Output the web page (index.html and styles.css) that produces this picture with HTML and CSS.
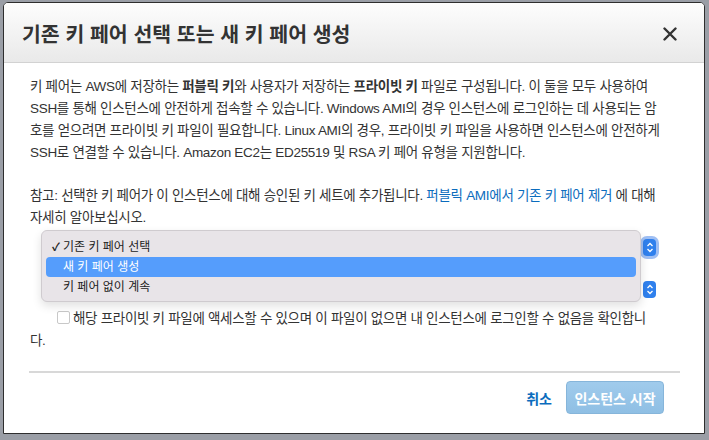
FILE: index.html
```html
<!DOCTYPE html>
<html lang="ko">
<head>
<meta charset="utf-8">
<link rel="stylesheet" href="styles.css">
</head>
<body>
<div class="modal">
  <div class="header">
    <h1 class="title">기존 키 페어 선택 또는 새 키 페어 생성</h1>
    <span class="close">
      <svg width="14" height="14" viewBox="0 0 14 14"><path d="M1.5 1.5 L12.5 12.5 M12.5 1.5 L1.5 12.5" stroke="#333" stroke-width="2.4" stroke-linecap="round"/></svg>
    </span>
  </div>
  <div class="body">
    <p class="para">키 페어는 AWS에 저장하는 <b>퍼블릭 키</b>와 사용자가 저장하는 <b>프라이빗 키</b> 파일로 구성됩니다. 이 둘을 모두 사용하여<br>SSH를 통해 인스턴스에 안전하게 접속할 수 있습니다. Windows AMI의 경우 인스턴스에 로그인하는 데 사용되는 암<br>호를 얻으려면 프라이빗 키 파일이 필요합니다. Linux AMI의 경우, 프라이빗 키 파일을 사용하면 인스턴스에 안전하게<br>SSH로 연결할 수 있습니다. Amazon EC2는 ED25519 및 RSA 키 페어 유형을 지원합니다.</p>
    <p class="para note">참고: 선택한 키 페어가 이 인스턴스에 대해 승인된 키 세트에 추가됩니다. <a class="link">퍼블릭 AMI에서 기존 키 페어 제거</a> 에 대해<br>자세히 알아보십시오.</p>
    <div class="form">
      <div class="select focused"><span class="arrows"><svg width="8" height="11" viewBox="0 0 8 11"><path d="M1.5 4 L4 1.5 L6.5 4 M1.5 7 L4 9.5 L6.5 7" fill="none" stroke="#fff" stroke-width="1.3"/></svg></span></div>
      <div class="select"><span class="arrows"><svg width="8" height="11" viewBox="0 0 8 11"><path d="M1.5 4 L4 1.5 L6.5 4 M1.5 7 L4 9.5 L6.5 7" fill="none" stroke="#fff" stroke-width="1.3"/></svg></span></div>
      <ul class="menu">
        <li class="item"><span class="check">✓</span>기존 키 페어 선택</li>
        <li class="item active"><span class="check"></span>새 키 페어 생성</li>
        <li class="item"><span class="check"></span>키 페어 없이 계속</li>
      </ul>
    </div>
    <label class="ack"><span class="box"></span>해당 프라이빗 키 파일에 액세스할 수 있으며 이 파일이 없으면 내 인스턴스에 로그인할 수 없음을 확인합니<br>다.</label>
  </div>
  <div class="footer">
    <a class="cancel">취소</a>
    <button class="primary">인스턴스 시작</button>
  </div>
</div>
</body>
</html>
```
FILE: styles.css
```css
html, body {
  margin: 0;
  padding: 0;
}
body {
  width: 709px;
  height: 440px;
  background: #9a9ea6;
  overflow: hidden;
  font-family: "Liberation Sans", "Noto Sans CJK KR", sans-serif;
  color: #333;
}
.modal {
  margin: 2px 0 0 3px;
  width: 702px;
  height: 432px;
  background: #fff;
  border: 1px solid #2e2e2e;
  border-radius: 5px 5px 0 0;
  display: flex;
  flex-direction: column;
  box-sizing: border-box;
  overflow: hidden;
}
.header {
  height: 59px;
  flex: none;
  background: linear-gradient(#fdfdfd, #e9e9e9);
  border-bottom: 1px solid #d2d2d2;
  display: flex;
  align-items: center;
  justify-content: space-between;
  padding: 0 27px 0 18px;
}
.title {
  margin: 0;
  font-size: 20.5px;
  font-weight: bold;
  color: #333;
}
.close {
  display: flex;
  padding-top: 2px;
}
.body {
  padding: 13px 0 0 26px;
  font-size: 13.5px;
  line-height: 22px;
}
.para {
  margin: 0 0 21px 0;
  letter-spacing: -0.3px;
  white-space: nowrap;
}
.para b {
  font-weight: bold;
}
.note {
  margin-bottom: 4px;
}
.link {
  color: #0b6cbd;
}
.form {
  position: relative;
  display: flex;
  flex-direction: column;
  gap: 25px;
  padding: 6px 0 0 0;
  width: 626px;
  align-items: flex-end;
}
.select {
  width: 300px;
  height: 17px;
  display: flex;
  justify-content: flex-end;
}
.arrows {
  width: 13px;
  height: 17px;
  background: #2f80ed;
  border-radius: 4px;
  display: flex;
  align-items: center;
  justify-content: center;
}
.focused .arrows {
  box-shadow: 0 0 0 3px #9fbff3;
}
.menu {
  position: absolute;
  left: 11px;
  top: -3px;
  width: 600px;
  height: 72px;
  margin: 0;
  padding: 6px 4px 4px;
  box-sizing: border-box;
  list-style: none;
  background: #e8e4e8;
  border: 1px solid #cfcbcf;
  border-radius: 6px;
  box-shadow: 0 4px 10px rgba(0, 0, 0, 0.12);
  font-size: 12px;
  color: #222;
  display: flex;
  flex-direction: column;
}
.item {
  height: 20px;
  flex: none;
  display: flex;
  align-items: center;
  padding-left: 6px;
  border-radius: 4px;
}
.check {
  width: 11px;
  font-size: 11px;
  font-weight: bold;
}
.active {
  background: #559dfc;
  color: #fff;
}
.ack {
  display: block;
  margin: 10px 0 0 0;
  white-space: nowrap;
  letter-spacing: -0.3px;
}
.box {
  display: inline-block;
  width: 11px;
  height: 11px;
  border: 1px solid #c8c8c8;
  border-radius: 2px;
  margin: 0 3px 0 27px;
  vertical-align: -1px;
  background: #fff;
}
.footer {
  margin: 19px 24px 0 25px;
  border-top: 2px solid #d8d8d8;
  padding-top: 8px;
  display: flex;
  justify-content: flex-end;
  align-items: center;
  gap: 14px;
}
.cancel {
  color: #0b6cbd;
  font-weight: bold;
  font-size: 14px;
}
.primary {
  width: 98px;
  height: 33px;
  border: 1px solid #86b5da;
  border-radius: 4px;
  background: linear-gradient(#a0cbec, #8fbfe4);
  color: #fff;
  font-family: inherit;
  font-weight: bold;
  font-size: 14px;
  margin-right: 16px;
  padding: 0;
}
```
